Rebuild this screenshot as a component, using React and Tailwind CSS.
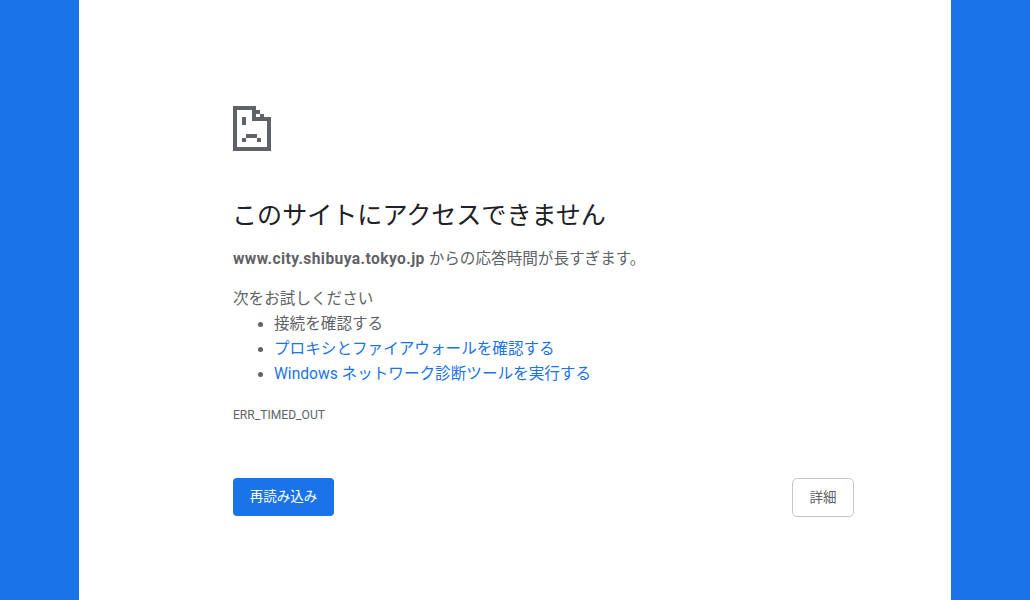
import React from 'react';

const font = "font-['Roboto','Noto_Sans_CJK_JP',sans-serif]";

const SadPageIcon = () => (
  <svg className="block w-[38px] h-[45px]" viewBox="0 0 38 45" fill="#5f6368" shapeRendering="crispEdges">
    <rect x="0" y="0" width="4" height="45" />
    <rect x="0" y="0" width="23" height="4" />
    <rect x="0" y="41" width="38" height="4" />
    <rect x="34" y="11" width="4" height="34" />
    <rect x="19" y="0" width="4" height="15" />
    <rect x="19" y="11" width="19" height="4" />
    <rect x="23" y="4" width="4" height="4" />
    <rect x="27" y="8" width="4" height="3" />
    <rect x="9" y="11" width="4" height="8" />
    <rect x="13" y="28" width="11" height="4" />
    <rect x="9" y="32" width="4" height="4" />
    <rect x="24" y="32" width="4" height="4" />
  </svg>
);

const App = () => {
  return (
    <div className={`h-[600px] w-full flex bg-[#1a73e8] ${font}`}>
      <div className="w-[79px] shrink-0" />
      <main className="w-[872px] shrink-0 bg-white pl-[154px] pr-[97px] pt-[106px]">
        <SadPageIcon />
        <h1 className="mt-[46px] -ml-px text-[25.07px] leading-[38px] font-normal text-[#202124]">
          このサイトにアクセスできません
        </h1>
        <p className="mt-[12px] text-[15.6px] leading-[25px] text-[#5f6368]">
          <strong className="font-bold tracking-[0.4px]">www.city.shibuya.tokyo.jp</strong> からの応答時間が長すぎます。
        </p>
        <p className="mt-[15px] text-[15.6px] leading-[25px] text-[#5f6368]">次をお試しください</p>
        <ul className="list-disc pl-[41px] text-[15.6px] leading-[25px] text-[#5f6368]">
          <li>接続を確認する</li>
          <li><a href="#" className="text-[#1a73e8]">プロキシとファイアウォールを確認する</a></li>
          <li><a href="#" className="text-[#1a73e8]">Windows ネットワーク診断ツールを実行する</a></li>
        </ul>
        <div className="mt-[19px] text-[12.1px] leading-[18px] text-[#5f6368]">ERR_TIMED_OUT</div>
        <div className="mt-[54px] flex items-start justify-between">
          <button className="w-[101px] h-[38px] pb-[2px] rounded-[4px] bg-[#1a73e8] text-white text-[13.5px]">
            再読み込み
          </button>
          <button className="w-[62px] h-[39px] rounded-[5px] border border-[#c4c7c5] bg-white text-[#5f6368] text-[13.5px]">
            詳細
          </button>
        </div>
      </main>
      <div className="flex-1" />
    </div>
  );
};

export default App;
